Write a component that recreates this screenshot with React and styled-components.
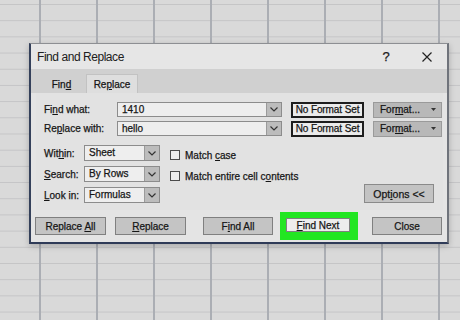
import React from "react";
import styled, { createGlobalStyle } from "styled-components";

const GlobalStyle = createGlobalStyle`
  html, body {
    margin: 0;
    padding: 0;
  }
  body {
    font-family: "Liberation Sans", Arial, sans-serif;
    color: #161616;
  }
`;

const Sheet = styled.div`
  width: 460px;
  height: 320px;
  box-sizing: border-box;
  overflow: hidden;
  padding: 43px 0 0 29px;
  background-color: #d9d9d9;
  background-image: linear-gradient(90deg, #abaeb4 2px, transparent 2px),
    linear-gradient(180deg, #c4c4c6 1px, transparent 1px);
  background-size: 57px 100%, 100% 16.2px;
  background-position: 39px 0, 0 4px;
`;

const Dialog = styled.div`
  width: 420px;
  height: 201px;
  box-sizing: border-box;
  display: flex;
  flex-direction: column;
  background: #e4e4e4;
  border-top: 1px solid #8d8f93;
  border-right: 2px solid #6f737b;
  border-left: 2px solid #34405a;
  border-bottom: 2px solid #2f3b58;
  box-shadow: 0 2px 6px rgba(0, 0, 0, 0.22);
  -webkit-text-stroke: 0.25px #161616;
`;

const TitleBar = styled.div`
  height: 25px;
  display: flex;
  align-items: center;
  padding: 0 0 0 6px;
  background: #e6e6e6;
`;

const Title = styled.div`
  flex: 1;
  font-size: 12px;
  letter-spacing: -0.45px;
  color: #202020;
  -webkit-text-stroke: 0;
`;

const TitleButton = styled.div`
  width: ${(p) => p.$w}px;
  margin-left: ${(p) => p.$ml || 0}px;
  display: flex;
  justify-content: center;
  align-items: center;
  font-size: 13px;
  color: #222;
`;

const TabStrip = styled.div`
  height: 24px;
  display: flex;
  align-items: flex-end;
  padding-left: 6px;
  background: #d0d0d0;
`;

const Tab = styled.div`
  width: ${(p) => p.$w}px;
  height: ${(p) => (p.$active ? 19 : 18)}px;
  display: flex;
  align-items: center;
  justify-content: center;
  font-size: 10px;
  box-sizing: border-box;
  background: ${(p) => (p.$active ? "#dedede" : "transparent")};
  border: ${(p) => (p.$active ? "1px solid #c2c2c2" : "none")};
  border-bottom: none;
`;

const Panel = styled.div`
  margin: 0 4px 0 5px;
  height: 117px;
  box-sizing: border-box;
  padding: 9px 9px 7px 8px;
  background: #e2e2e2;
  display: flex;
  flex-direction: column;
  font-size: 10px;
`;

const FieldGrid = styled.div`
  display: grid;
  grid-template-columns: 64px 165px 73px 69px;
  grid-auto-rows: 15px;
  column-gap: 9px;
  row-gap: 4px;
  align-items: center;
`;

const Label = styled.div`
  white-space: nowrap;
  line-height: 15px;
`;

const Combo = styled.div`
  height: 15px;
  display: flex;
  box-sizing: border-box;
  border: 1px solid #8c8c8c;
  background: #eeeeee;
`;

const ComboText = styled.div`
  flex: 1;
  padding-left: 4px;
  line-height: 13px;
  white-space: nowrap;
`;

const DropButton = styled.div`
  width: 14px;
  display: flex;
  align-items: center;
  justify-content: center;
  background: #bcbcbc;
  border-left: 1px solid #9a9a9a;
`;

const FormatSet = styled.div`
  height: 16px;
  box-sizing: border-box;
  border: 2px solid #1d1d1d;
  background: #ebebeb;
  display: flex;
  align-items: center;
  justify-content: center;
  white-space: nowrap;
  letter-spacing: -0.1px;
`;

const FormatButton = styled.div`
  height: 16px;
  box-sizing: border-box;
  border: 1px solid #9a9a9a;
  background: #b8b8b8;
  display: flex;
  align-items: center;
  justify-content: flex-end;
  padding-right: 5px;
  gap: 11px;
  white-space: nowrap;
`;

const Options = styled.div`
  margin-top: 9px;
  display: flex;
  flex: 1;
`;

const OptionColumn = styled.div`
  display: flex;
  flex-direction: column;
  gap: ${(p) => p.$gap}px;
`;

const OptionRow = styled.div`
  display: flex;
  align-items: center;
  height: ${(p) => p.$h}px;
  white-space: nowrap;
`;

const ShortLabel = styled(Label)`
  width: 40px;
`;

const SelectBox = styled(Combo)`
  width: 76px;
  height: 16px;
`;

const Checks = styled(OptionColumn)`
  margin-left: 10px;
  margin-top: 2px;
`;

const CheckBox = styled.div`
  width: 10px;
  height: 10px;
  box-sizing: border-box;
  border: 1px solid #4a4a4a;
  background: #ececec;
  margin-right: 5px;
`;

const Spacer = styled.div`
  flex: 1;
`;

const OptionsButton = styled.div`
  align-self: flex-end;
  width: 70px;
  height: 19px;
  box-sizing: border-box;
  border: 1px solid #8a8a8a;
  background: #c3c3c3;
  display: flex;
  align-items: center;
  justify-content: center;
  font-size: 10.5px;
`;

const ButtonBar = styled.div`
  flex: 1;
  display: flex;
  align-items: center;
  padding-left: 4px;
  font-size: 10px;
`;

const Button = styled.div`
  width: ${(p) => p.$w}px;
  height: ${(p) => p.$h || 18}px;
  margin-left: ${(p) => p.$ml || 0}px;
  box-sizing: border-box;
  border: 1px solid #808080;
  background: ${(p) => p.$bg || "#c4c4c4"};
  display: flex;
  align-items: center;
  justify-content: center;
  white-space: nowrap;
`;

const Highlight = styled.div`
  margin-left: 7px;
  padding: 6px 8px 8px 6px;
  background: #22e622;
  display: flex;
`;

const Key = styled.span`
  text-decoration: underline;
  text-underline-offset: 1px;
`;

const Chevron = () => (
  <svg width="8" height="5" viewBox="0 0 8 5">
    <polyline points="0.5,0.5 4,4 7.5,0.5" fill="none" stroke="#333" strokeWidth="1.2" />
  </svg>
);

const Caret = () => (
  <svg width="5" height="3" viewBox="0 0 5 3">
    <polygon points="0,0 5,0 2.5,3" fill="#333" />
  </svg>
);

const CloseIcon = () => (
  <svg width="10" height="10" viewBox="0 0 10 10">
    <path d="M0.5 0.5 L9.5 9.5 M9.5 0.5 L0.5 9.5" stroke="#222" strokeWidth="1.2" />
  </svg>
);

const selects = [
  { label: <>Wit<Key>h</Key>in:</>, value: "Sheet" },
  { label: <><Key>S</Key>earch:</>, value: "By Rows" },
  { label: <><Key>L</Key>ook in:</>, value: "Formulas" },
];

const fields = [
  { label: <>Fi<Key>n</Key>d what:</>, value: "1410" },
  { label: <>Re<Key>p</Key>lace with:</>, value: "hello" },
];

export default function App() {
  return (
    <>
      <GlobalStyle />
      <Sheet>
        <Dialog>
          <TitleBar>
            <Title>Find and Replace</Title>
            <TitleButton $w={30}>?</TitleButton>
            <TitleButton $w={40} $ml={6}>
              <CloseIcon />
            </TitleButton>
          </TitleBar>

          <TabStrip>
            <Tab $w={49}>
              <span>
                Fin<Key>d</Key>
              </span>
            </Tab>
            <Tab $w={52} $active>
              <span>
                Re<Key>p</Key>lace
              </span>
            </Tab>
          </TabStrip>

          <Panel>
            <FieldGrid>
              {fields.map((f, i) => (
                <React.Fragment key={i}>
                  <Label>{f.label}</Label>
                  <Combo>
                    <ComboText>{f.value}</ComboText>
                    <DropButton>
                      <Chevron />
                    </DropButton>
                  </Combo>
                  <FormatSet>No Format Set</FormatSet>
                  <FormatButton>
                    <span>
                      For<Key>m</Key>at...
                    </span>
                    <Caret />
                  </FormatButton>
                </React.Fragment>
              ))}
            </FieldGrid>

            <Options>
              <OptionColumn $gap={5}>
                {selects.map((s, i) => (
                  <OptionRow key={i} $h={16}>
                    <ShortLabel>{s.label}</ShortLabel>
                    <SelectBox>
                      <ComboText>{s.value}</ComboText>
                      <DropButton>
                        <Chevron />
                      </DropButton>
                    </SelectBox>
                  </OptionRow>
                ))}
              </OptionColumn>
              <Checks $gap={5}>
                <OptionRow $h={16}>
                  <CheckBox />
                  <span>
                    Match <Key>c</Key>ase
                  </span>
                </OptionRow>
                <OptionRow $h={16}>
                  <CheckBox />
                  <span>
                    Match entire cell c<Key>o</Key>ntents
                  </span>
                </OptionRow>
              </Checks>
              <Spacer />
              <OptionsButton>
                <span>
                  Opt<Key>i</Key>ons &lt;&lt;
                </span>
              </OptionsButton>
            </Options>
          </Panel>

          <ButtonBar>
            <Button $w={71}>
              <span>
                Replace <Key>A</Key>ll
              </span>
            </Button>
            <Button $w={71} $ml={9}>
              <span>
                <Key>R</Key>eplace
              </span>
            </Button>
            <Button $w={70} $ml={17}>
              <span>
                F<Key>i</Key>nd All
              </span>
            </Button>
            <Highlight>
              <Button $w={64} $h={14} $bg="#ededed">
                <span>
                  <Key>F</Key>ind Next
                </span>
              </Button>
            </Highlight>
            <Button $w={70} $ml={14}>
              <span>Close</span>
            </Button>
          </ButtonBar>
        </Dialog>
      </Sheet>
    </>
  );
}
